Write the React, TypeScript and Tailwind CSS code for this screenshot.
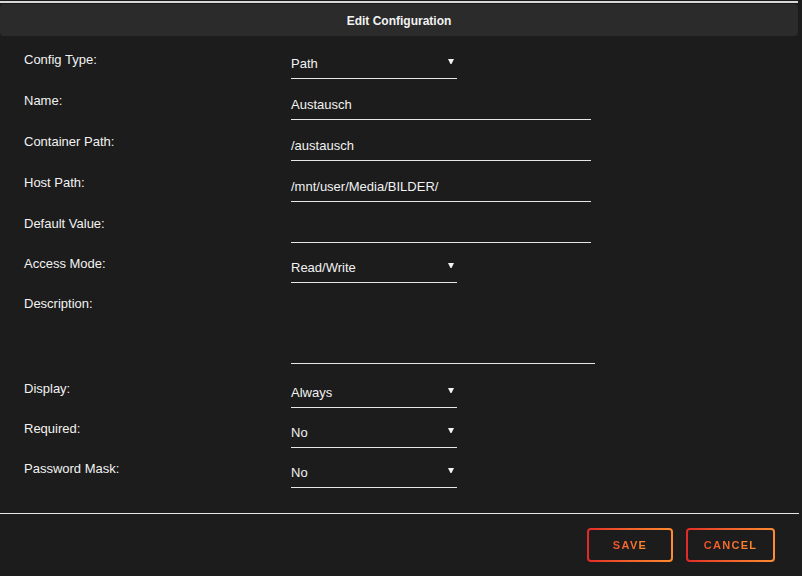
import React from 'react';

type Field = {
  label: string;
  kind: 'select' | 'text' | 'area';
  value?: string;
  h: string;
};

const fields: Field[] = [
  { label: 'Config Type:', kind: 'select', value: 'Path', h: 'h-[41px]' },
  { label: 'Name:', kind: 'text', value: 'Austausch', h: 'h-[41px]' },
  { label: 'Container Path:', kind: 'text', value: '/austausch', h: 'h-[41px]' },
  { label: 'Host Path:', kind: 'text', value: '/mnt/user/Media/BILDER/', h: 'h-[41px]' },
  { label: 'Default Value:', kind: 'text', value: '', h: 'h-[40px]' },
  { label: 'Access Mode:', kind: 'select', value: 'Read/Write', h: 'h-[40px]' },
  { label: 'Description:', kind: 'area', h: 'h-[85px]' },
  { label: 'Display:', kind: 'select', value: 'Always', h: 'h-[40px]' },
  { label: 'Required:', kind: 'select', value: 'No', h: 'h-[40px]' },
  { label: 'Password Mask:', kind: 'select', value: 'No', h: 'h-[40px]' },
];

function Caret() {
  return (
    <svg width="6" height="7" viewBox="0 0 6 7" className="mt-[4px]">
      <path d="M0 1 H6 L3.5 6 H2.5 Z" fill="#f2f2f2" />
    </svg>
  );
}

function Control({ f }: { f: Field }) {
  if (f.kind === 'select') {
    return (
      <div className="mt-[4px] flex h-[25px] w-[166px] items-start justify-between border-b border-[#e6e6e6] pr-[3px]">
        <span className="leading-[20px]">{f.value}</span>
        <Caret />
      </div>
    );
  }
  if (f.kind === 'area') {
    return <div className="mt-[5px] h-[65px] w-[304px] border-b border-[#e6e6e6]" />;
  }
  return (
    <div className="mt-[4px] flex h-[25px] w-[300px] items-start border-b border-[#e6e6e6]">
      <span className="leading-[20px]">{f.value}</span>
    </div>
  );
}

function OutlineButton({ label, w }: { label: string; w: string }) {
  return (
    <div className={`rounded-[4px] bg-gradient-to-r from-[#e22828] to-[#ff8c2f] p-[2px] ${w}`}>
      <div className="flex h-[30px] items-center justify-center rounded-[2px] bg-[#1c1c1c]">
        <span className="bg-gradient-to-r from-[#f0502a] to-[#ff8c2f] bg-clip-text text-[11px] font-bold tracking-[1.3px] text-transparent">
          {label}
        </span>
      </div>
    </div>
  );
}

export default function App() {
  return (
    <div
      className="h-[576px] w-[802px] overflow-hidden bg-[#1c1c1c] text-[13px] text-[#f2f2f2]"
      style={{ fontFamily: '"Liberation Sans", Arial, sans-serif' }}
    >
      <div className="pt-[1px]">
        <div className="h-[2px] w-[798px] bg-[#d8d8d8]" />
      </div>
      <div className="mt-[1px] flex h-[32px] w-[798px] items-center justify-center rounded-[4px] bg-[#2b2b2b]">
        <span className="pt-[1px] text-[12px] font-bold">Edit Configuration</span>
      </div>

      <div className="pt-[14px]">
        {fields.map((f) => (
          <div key={f.label} className={`flex items-start ${f.h}`}>
            <div className="w-[291px] pl-[24px] leading-[20px]">{f.label}</div>
            <Control f={f} />
          </div>
        ))}
      </div>

      <div className="mt-[14px] h-px w-[799px] bg-[#e6e6e6]" />

      <div className="flex justify-end gap-[13px] pr-[27px] pt-[14px]">
        <OutlineButton label="SAVE" w="w-[86px]" />
        <OutlineButton label="CANCEL" w="w-[89px]" />
      </div>
    </div>
  );
}
